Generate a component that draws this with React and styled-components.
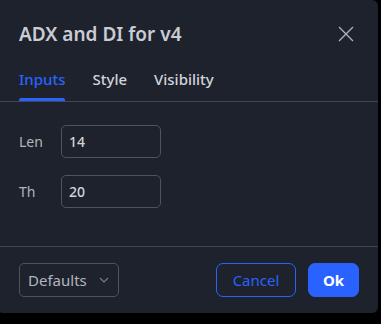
import React, { useState } from "react";
import styled, { createGlobalStyle } from "styled-components";

const GlobalStyle = createGlobalStyle`
  html, body {
    margin: 0;
    padding: 0;
    background: #000;
  }
  body {
    font-family: "Noto Sans", Roboto, sans-serif;
  }
`;

const Dialog = styled.div`
  width: 378px;
  height: 313px;
  background: #1e222d;
  border-radius: 0 6px 6px 2px;
  display: flex;
  flex-direction: column;
  box-sizing: border-box;
  color: #d1d4dc;
`;

const Header = styled.div`
  display: flex;
  align-items: center;
  justify-content: space-between;
  padding: 20px 19px 8px 19px;
`;

const Title = styled.h1`
  margin: 0;
  font-size: 19px;
  line-height: 28px;
  font-weight: 600;
  color: #c9ccd4;
`;

const CloseButton = styled.button`
  background: none;
  border: none;
  padding: 0;
  width: 28px;
  height: 28px;
  display: flex;
  align-items: center;
  justify-content: center;
  color: #b2b5be;
  cursor: pointer;
  margin-right: -1px;
`;

const Tabs = styled.div`
  display: flex;
  gap: 27px;
  padding: 0 19px;
  height: 46px;
  border-bottom: 1px solid #434651;
  box-sizing: border-box;
`;

const Tab = styled.div`
  position: relative;
  display: flex;
  align-items: center;
  font-size: 15px;
  font-weight: 500;
  color: ${(p) => (p.active ? "#2962ff" : "#d1d4dc")};
  cursor: pointer;

  &::after {
    content: "";
    display: ${(p) => (p.active ? "block" : "none")};
    position: absolute;
    left: 0;
    right: 0;
    bottom: 0;
    height: 3px;
    background: #2962ff;
    border-radius: 2px 2px 0 0;
  }
`;

const Content = styled.div`
  flex: 1;
  padding: 23px 19px 0 19px;
  display: flex;
  flex-direction: column;
  gap: 17px;
  border-bottom: 1px solid #434651;
`;

const Row = styled.div`
  display: flex;
  align-items: center;
`;

const Label = styled.label`
  width: 42px;
  font-size: 14px;
  color: #b2b5be;
`;

const Input = styled.input`
  width: 100px;
  height: 33px;
  box-sizing: border-box;
  background: transparent;
  border: 1px solid #50535e;
  border-radius: 5px;
  padding: 0 7px;
  font-family: inherit;
  font-size: 14px;
  font-weight: 500;
  color: #d1d4dc;
  outline: none;
`;

const Footer = styled.div`
  display: flex;
  align-items: center;
  padding: 16px 19px;
  gap: 12px;
`;

const Select = styled.div`
  width: 100px;
  height: 34px;
  box-sizing: border-box;
  border: 1px solid #50535e;
  border-radius: 5px;
  display: flex;
  align-items: center;
  justify-content: space-between;
  padding: 0 9px 0 8px;
  font-size: 15px;
  color: #b2b5be;
  margin-right: auto;
`;

const Button = styled.button`
  height: 34px;
  box-sizing: border-box;
  border-radius: 7px;
  font-family: inherit;
  font-size: 15px;
  padding: 0;
  width: ${(p) => p.w}px;
  cursor: pointer;
  border: 1px solid #2962ff;
  background: ${(p) => (p.primary ? "#2962ff" : "transparent")};
  color: ${(p) => (p.primary ? "#fff" : "#2962ff")};
  font-weight: ${(p) => (p.primary ? 700 : 400)};
`;

export default function App() {
  const [tab, setTab] = useState("Inputs");
  return (
    <>
      <GlobalStyle />
      <Dialog>
        <Header>
          <Title>ADX and DI for v4</Title>
          <CloseButton aria-label="Close">
            <svg width="18" height="18" viewBox="0 0 18 18" fill="none">
              <path d="M2 2L16 16M16 2L2 16" stroke="currentColor" strokeWidth="1.3" />
            </svg>
          </CloseButton>
        </Header>
        <Tabs>
          {["Inputs", "Style", "Visibility"].map((t) => (
            <Tab key={t} active={tab === t} onClick={() => setTab(t)}>
              {t}
            </Tab>
          ))}
        </Tabs>
        <Content>
          <Row>
            <Label>Len</Label>
            <Input defaultValue="14" />
          </Row>
          <Row>
            <Label>Th</Label>
            <Input defaultValue="20" />
          </Row>
        </Content>
        <Footer>
          <Select>
            Defaults
            <svg width="10" height="6" viewBox="0 0 10 6" fill="none">
              <path d="M1 1L5 5L9 1" stroke="#787b86" strokeWidth="1.2" />
            </svg>
          </Select>
          <Button w={80}>Cancel</Button>
          <Button primary w={51}>Ok</Button>
        </Footer>
      </Dialog>
    </>
  );
}
